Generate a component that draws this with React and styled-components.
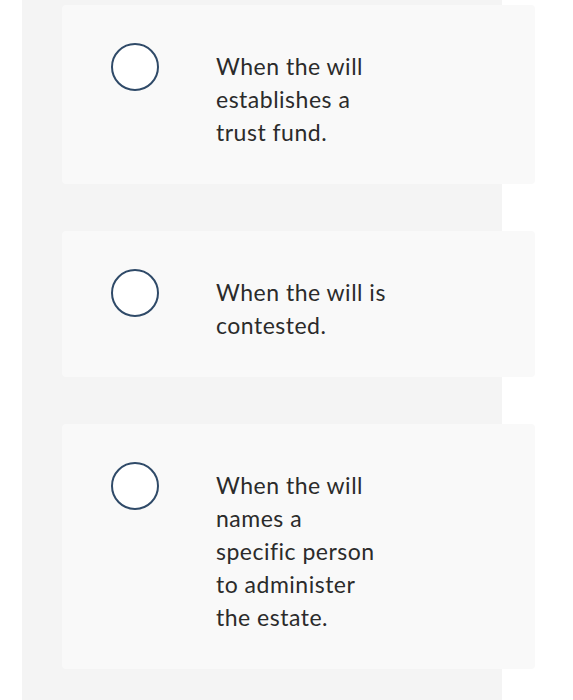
import React from 'react';
import styled, { createGlobalStyle } from 'styled-components';

const GlobalStyle = createGlobalStyle`
  body {
    margin: 0;
    background: #ffffff;
    font-family: Lato, "Open Sans", sans-serif;
  }
`;

const Column = styled.div`
  margin-left: 22px;
  width: 480px;
  min-height: 700px;
  background: #f4f4f4;
  padding: 5px 0 0 40px;
  box-sizing: border-box;
  display: flex;
  flex-direction: column;
  gap: 47px;
`;

const Card = styled.label`
  width: 473px;
  box-sizing: border-box;
  background: #f9f9f9;
  border-radius: 4px;
  padding: 38px 20px 35px 49px;
  display: flex;
  align-items: flex-start;
  gap: 57px;
  cursor: pointer;
`;

const Radio = styled.span`
  flex: none;
  width: 48px;
  height: 48px;
  box-sizing: border-box;
  border-radius: 50%;
  border: 2px solid #2f4a68;
  background: #ffffff;
`;

const Answer = styled.div`
  width: 170px;
  padding-top: 7px;
  font-size: 23px;
  line-height: 33px;
  letter-spacing: 0.5px;
  color: #2b2b2b;
`;

const options = [
  'When the will establishes a trust fund.',
  'When the will is contested.',
  'When the will names a specific person to administer the estate.',
];

export default function App() {
  return (
    <>
      <GlobalStyle />
      <Column>
        {options.map((text) => (
          <Card key={text}>
            <Radio />
            <Answer>{text}</Answer>
          </Card>
        ))}
      </Column>
    </>
  );
}
